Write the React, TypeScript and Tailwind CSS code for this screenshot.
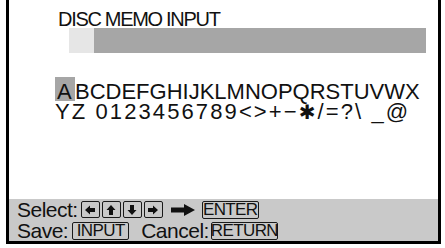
const font = { fontFamily: '"Liberation Sans", Arial, sans-serif' };

type Dir = "left" | "up" | "down" | "right";

function ArrowKey({ dir }: { dir: Dir }) {
  const rot = { left: 0, up: 90, down: 270, right: 180 }[dir];
  return (
    <span className="flex h-[17px] w-[19px] items-center justify-center rounded-[2px] border-[1.5px] border-[#1a1a1a]">
      <svg width="12" height="12" viewBox="0 0 12 12">
        <g transform={`rotate(${rot} 6 6)`}>
          <path d="M1 6 L6 1.5 L6 4 L11 4 L11 8 L6 8 L6 10.5 Z" fill="#111" />
        </g>
      </svg>
    </span>
  );
}

function Key({ label, w }: { label: string; w: string }) {
  return (
    <span
      className={`flex h-[18px] ${w} items-center justify-center rounded-[2px] border-[1.5px] border-[#1a1a1a] text-[17px] leading-none tracking-[-0.6px] text-[#111]`}
    >
      {label}
    </span>
  );
}

export default function App() {
  return (
    <div className="h-[248px] w-[445px] bg-white" style={font}>
      <div className="ml-[6px] flex h-[244px] w-[435px] flex-col border-x-[3px] border-b-[3px] border-black">
        <div className="flex-1">
          <div className="ml-[49px] mt-[9px] h-[20px] whitespace-nowrap text-[20px] leading-[20px] tracking-[-1.3px] text-[#111]">
            DISC MEMO INPUT
          </div>
          <div className="ml-[60px] mt-[-1px] flex h-[25px] w-[357px]">
            <div className="w-[25px] bg-[#e6e6e6]" />
            <div className="flex-1 bg-[#a6a6a6]" />
          </div>
          <div className="ml-[46px] mt-[29px] text-[22px] leading-[20px] text-[#111]">
            <div className="whitespace-nowrap">
              <span className="relative inline-block w-[20px] pl-[2px]">
                <span className="absolute left-0 top-[-5px] h-[24px] w-[20px] bg-[#a6a6a6]" />
                <span className="relative">A</span>
              </span>
              BCDEFGHIJKLMNOPQRSTUVWX
            </div>
            <div className="whitespace-nowrap tracking-[2.1px]">
              YZ 0123456789&lt;&gt;+−
              <span style={{ fontFamily: '"DejaVu Sans", sans-serif' }} className="text-[20px]">
                ✱
              </span>
              /=?\ _@
            </div>
          </div>
        </div>
        <div className="h-[42px] bg-[#c9c9c9] pl-[8px] text-[21px] leading-none tracking-[-0.5px] text-[#111]">
          <div className="flex h-[21px] items-center">
            <span>Select:</span>
            <div className="ml-[3px] flex gap-[2px]">
              <ArrowKey dir="left" />
              <ArrowKey dir="up" />
              <ArrowKey dir="down" />
              <ArrowKey dir="right" />
            </div>
            <svg className="ml-[8px]" width="24" height="12" viewBox="0 0 24 12">
              <path d="M0 3.5 L13 3.5 L13 0 L24 6 L13 12 L13 8.5 L0 8.5 Z" fill="#111" />
            </svg>
            <span className="ml-[7px]">
              <Key label="ENTER" w="w-[57px]" />
            </span>
          </div>
          <div className="flex h-[21px] items-center">
            <span>Save:</span>
            <span className="ml-[4px]">
              <Key label="INPUT" w="w-[57px]" />
            </span>
            <span className="ml-[12px]">Cancel:</span>
            <span className="ml-[2px]">
              <Key label="RETURN" w="w-[67px]" />
            </span>
          </div>
        </div>
      </div>
    </div>
  );
}
